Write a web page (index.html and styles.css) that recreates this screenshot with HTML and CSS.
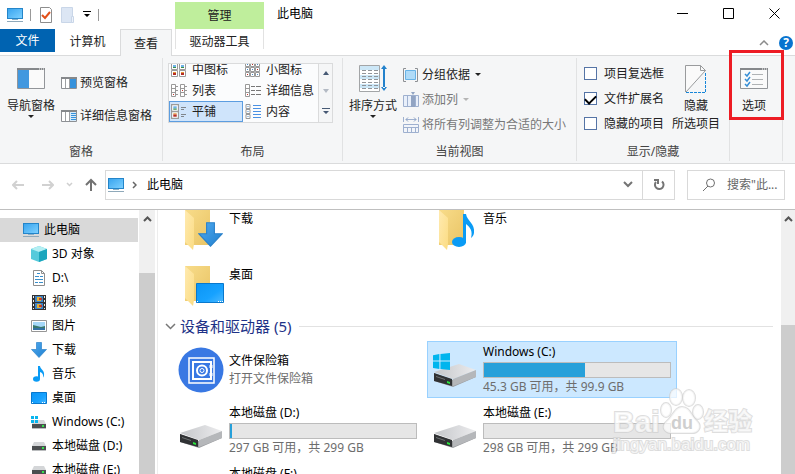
FILE: index.html
```html
<!DOCTYPE html>
<html lang="zh-CN">
<head>
<meta charset="utf-8">
<title>此电脑</title>
<link rel="stylesheet" href="styles.css">
</head>
<body>
<svg class="defs" width="0" height="0" aria-hidden="true">
  <defs>
    <linearGradient id="screen" x1="0" y1="0" x2="1" y2="1"><stop offset="0" stop-color="#3aa5ef"/><stop offset="1" stop-color="#7cd0ff"/></linearGradient>
    <linearGradient id="desk" x1="0" y1="0" x2="1" y2="1"><stop offset="0" stop-color="#0b95f5"/><stop offset=".6" stop-color="#17a2ff"/><stop offset="1" stop-color="#4db9ff"/></linearGradient>
    <linearGradient id="arrow" x1="0" y1="0" x2="1" y2="1"><stop offset="0" stop-color="#4fa9ee"/><stop offset="1" stop-color="#2080d0"/></linearGradient>
    <linearGradient id="back" x1="0" y1="0" x2="1" y2="1"><stop offset="0" stop-color="#f8dc8a"/><stop offset="1" stop-color="#e9c465"/></linearGradient>
    <linearGradient id="flap" x1="0" y1="0" x2="1" y2="1"><stop offset="0" stop-color="#ffeab0"/><stop offset="1" stop-color="#fbdc83"/></linearGradient>
    <linearGradient id="metal" x1="0" y1="0" x2="1" y2="0"><stop offset="0" stop-color="#c4c6c9"/><stop offset="1" stop-color="#ececee"/></linearGradient>
    <symbol id="pc" viewBox="0 0 16 16"><path fill="#2485c9" d="M0 1h16v11H0z"/><path fill="url(#screen)" d="M1 2h14v9H1z"/><path fill="#8bafc6" d="M5 12h6v1H5z"/><path fill="#8fa9ba" d="M0 14h16v1H0z"/></symbol>
    <symbol id="down" viewBox="0 0 16 16"><path fill="url(#arrow)" stroke="#2b82ca" stroke-width=".7" d="M5.500.500h5v7h5L8 15.500.500 7.500h5z"/></symbol>
    <symbol id="note" viewBox="0 0 16 16"><ellipse cx="5.500" cy="13" rx="3.500" ry="2.800" fill="#0a9bf5"/><path fill="#0a9bf5" d="M7 0h2c0 3 5 4.500 4 9.500-.3 1.500-1 2-1 2 .6-3-.5-4.500-3-5.500v7H7z"/></symbol>
    <symbol id="desktop" viewBox="0 0 16 12"><path fill="url(#desk)" stroke="#0878cd" d="M.5.5h15v11H.5z"/><path stroke="#fff" stroke-dasharray="1 1" d="M1 10.500h2M11 10.500h4"/></symbol>
    <symbol id="drive" viewBox="0 0 16 10"><path fill="#d4d6d8" d="m3 0h10l2 4H1z"/><path fill="#4b4e50" d="M1 4h14v4H1z"/><path fill="#babcbe" d="M1 8h14v1H1z"/><path fill="#35e24b" d="M11 5h2v2h-2z"/></symbol>
    <symbol id="bigdrive" viewBox="0 0 44 24"><path fill="#9b9da0" d="M1 9 20 16 43 7v6L20 23 1 17z"/><path fill="url(#metal)" d="m1 8 25-8 17 6-23 9z"/><path fill="#b5b7ba" d="m20 15 23-9v7l-23 9z"/><path fill="#303234" d="m1 9 18 6v7L1 17z"/><path fill="#6f7274" d="m3 12 9 3v1l-9-3z"/><path fill="#28e63c" d="m14 17 3 1v2l-3-1z"/></symbol>
    <symbol id="win" viewBox="0 0 16 16"><path fill="#00b5ee" d="m0 2 6-1v6H0zM7 1l9-1v7H7zM0 8h6v7l-6-1zM7 8h9v8l-9-1z"/></symbol>
    <symbol id="folder" viewBox="0 0 40 42"><path fill="url(#back)" d="M1 0h25v35H1z"/><path fill="url(#flap)" d="m1 0 9 8v26l-1 6-8-8z"/></symbol>
    <symbol id="pane" viewBox="0 0 28 21"><path fill="#fafafa" stroke="#929599" d="M.5.5h27v20H.5z"/><path fill="#85888b" d="M0 0h28v2H0z"/><path stroke="#fff" stroke-dasharray="1 1" d="M22 1h5"/></symbol>
    <symbol id="small-pane" viewBox="0 0 16 12"><path fill="#fff" stroke="#8d9094" d="M.5.5h15v11H.5z"/><path fill="#85888b" d="M0 0h16v2H0z"/><path stroke="#9da0a3" d="M4.500 2v9M8.500 2v9"/></symbol>
    <symbol id="thumb" viewBox="0 0 7 7"><path fill="#fff" stroke="#9b9b9b" d="M.5.5h6v6h-6z"/><path fill="#6eb2e6" d="M2 2h3v2H2z"/><path fill="#3a9148" d="M2 4h3v1H2z"/></symbol>
    <symbol id="thumb-red" viewBox="0 0 7 7"><path fill="#fff" stroke="#9b9b9b" d="M.5.5h6v6h-6z"/><path fill="#e79836" d="M2 2h3v1H2z"/><path fill="#b42c27" d="M2 3h3v2H2z"/></symbol>
    <symbol id="dot" viewBox="0 0 5 5"><path fill="#fff" stroke="#999" d="M.5.5h4v4h-4z"/><path fill="#4a8bc8" d="M2 2h1v1H2z"/></symbol>
  </defs>
</svg>

<header class="titlebar">
  <div class="quick">
    <svg class="i16" aria-hidden="true"><use href="#pc"/></svg>
    <span class="tick"></span>
    <button class="plain" aria-label="属性"><svg width="12" height="16"><path fill="#fff" stroke="#8d8d8d" d="M.5.5h9l2 2v13H.5z"/><path fill="none" stroke="#e2501a" stroke-width="2" d="m2 8 3 3 5-6"/></svg></button>
    <button class="plain" aria-label="新建文件夹"><svg width="13" height="16"><path fill="#dce6f4" stroke="#c9d6e8" d="M.5.5h11v15H.5z"/><path fill="#edf2fa" stroke="#c9d6e8" d="M10.500 9.500h2v6h-2z"/></svg></button>
    <button class="plain" aria-label="自定义快速访问工具栏"><svg width="8" height="7"><path d="M0 0h8v1H0zM1 3h6L4 6z"/></svg></button>
    <span class="tick"></span>
  </div>
  <div class="context-title">管理</div>
  <h1 class="title">此电脑</h1>
  <div class="window-buttons">
    <button aria-label="最小化"><svg width="11" height="11"><path stroke="#000" d="M0 5.500h11"/></svg></button>
    <button aria-label="最大化"><svg width="11" height="11"><path fill="none" stroke="#000" d="M.5.5h10v10H.5z"/></svg></button>
    <button aria-label="关闭"><svg width="11" height="11"><path stroke="#000" d="m.5.5 10 10m0-10-10 10"/></svg></button>
  </div>
</header>

<nav class="tabs">
  <button class="tab file">文件</button>
  <button class="tab computer">计算机</button>
  <button class="tab active">查看</button>
  <button class="tab context">驱动器工具</button>
  <span class="tab-tools">
    <button class="plain" aria-label="折叠功能区"><svg width="10" height="6"><path fill="none" stroke="#8b8b8b" stroke-width="1.500" d="m1 5 4-4 4 4"/></svg></button>
    <button class="help" aria-label="帮助">?</button>
  </span>
</nav>

<section class="ribbon">
  <div class="group panes">
    <div class="group-body">
      <button class="large"><svg width="28" height="21"><use href="#pane"/><path fill="#4298df" d="M1 2h11v18H1z"/></svg><span>导航窗格</span><i class="caret"></i></button>
      <div class="stack wide-stack">
        <button class="small"><svg width="16" height="12"><use href="#small-pane"/><path fill="#3592dc" d="M9 2h6v9H9z"/></svg>预览窗格</button>
        <button class="small"><svg width="16" height="12"><use href="#small-pane"/><path fill="#d7ebfb" d="M9 2h6v9H9z"/><path stroke="#3592dc" d="M10 3.500h5M10 5.500h5M10 7.500h5M10 9.500h5"/></svg>详细信息窗格</button>
      </div>
    </div>
    <div class="group-name">窗格</div>
  </div>

  <div class="group layout">
    <div class="group-body">
      <div class="gallery">
        <div class="views">
          <button class="view"><svg class="i16"><use href="#thumb" width="7" height="7" x="0" y="1"/><use href="#thumb" width="7" height="7" x="8" y="1"/><use href="#thumb-red" width="7" height="7" x="0" y="8"/><use href="#thumb-red" width="7" height="7" x="8" y="8"/></svg>中图标</button>
          <button class="view"><svg class="i16"><use href="#dot" width="5" height="5"/><use href="#dot" width="5" height="5" x="5"/><use href="#dot" width="5" height="5" x="10"/><use href="#dot" width="5" height="5" y="5"/><use href="#dot" width="5" height="5" x="5" y="5"/><use href="#dot" width="5" height="5" x="10" y="5"/><use href="#dot" width="5" height="5" y="10"/><use href="#dot" width="5" height="5" x="5" y="10"/><use href="#dot" width="5" height="5" x="10" y="10"/><path fill="#b92e27" d="M7 2h1v1H7zM12 7h1v1h-1zM2 12h1v1H2z"/></svg>小图标</button>
          <button class="view"><svg class="i16"><path fill="#fff" stroke="#999" d="M.5 1.500h4v12h-4zM9.500 1.500h4v12h-4zM0 5.500h5M0 9.500h5M9 5.500h5M9 9.500h5"/><path stroke="#999" d="M5 3.500h2M5 7.500h2M5 11.500h2M14 3.500h2M14 7.500h2M14 11.500h2"/><path fill="#c73932" d="M2 11h1v1H2zM11 7h1v1h-1z"/></svg>列表</button>
          <button class="view"><svg class="i16"><path fill="#fff" stroke="#999" d="M.5 1.500h4v12h-4zM0 5.500h5M0 9.500h5"/><path stroke="#777" d="M6 3.500h4M11 3.500h5M6 7.500h4M11 7.500h5M6 11.500h4M11 11.500h5"/><path fill="#c73932" d="M2 11h1v1H2z"/></svg>详细信息</button>
          <button class="view selected"><svg class="i16"><use href="#thumb" width="8" height="8"/><use href="#thumb-red" width="8" height="8" y="7"/><path stroke="#7f858b" d="M10 3.500h5M10 5.500h3M10 10.500h5M10 12.500h3"/></svg>平铺</button>
          <button class="view"><svg class="i16"><use href="#dot" width="6" height="5"/><use href="#dot" width="6" height="5" y="5"/><use href="#dot" width="6" height="5" y="10"/><path stroke="#4b91e3" d="M8 1.500h8M8 4.500h8M8 7.500h8M8 10.500h8M8 13.500h8"/></svg>内容</button>
        </div>
        <div class="gallery-scroll">
          <button aria-label="上一行"><svg width="6" height="4"><path fill="#465974" d="M0 4h6L3 0z"/></svg></button>
          <button aria-label="下一行"><svg width="6" height="4"><path fill="#b3bac4" d="M0 0h6L3 4z"/></svg></button>
          <button aria-label="更多"><svg width="8" height="7"><path fill="#465974" d="M0 0h8v1H0zM1 3h6L4 6z"/></svg></button>
        </div>
      </div>
    </div>
    <div class="group-name">布局</div>
  </div>

  <div class="group current">
    <div class="group-body">
      <button class="large"><svg width="28" height="27"><path fill="#fff" stroke="#a3a5a7" d="M.5.5h20v26H.5z"/><path fill="#cce7f7" d="M1 1h19v4H1zM1 10h19v4H1zM1 19h19v4H1z"/><path stroke="#929599" stroke-dasharray="4 2" d="M3 5.500h16M3 8.500h16M3 11.500h16M3 14.500h16M3 17.500h16M3 20.500h16M3 23.500h16"/><path fill="#2382cc" d="M24 4h2v19h-2zM22 4l3-4 3 4zM22 22l3 4 3-4z"/></svg><span>排序方式</span><i class="caret"></i></button>
      <div class="stack">
        <button class="small"><svg class="i16"><path fill="#afdbf8" stroke="#68b3e6" d="M2.500 3.500h10v9h-10z"/><path fill="none" stroke="#8d9094" d="M3 1.500H.5v13H3M12 1.500h2.500v13H12"/></svg>分组依据<i class="caret"></i></button>
        <button class="small" disabled><svg class="i16"><path fill="#e8effa" stroke="#9eb0cf" d="M.5 3.500h15v11H.5z"/><path stroke="#9eb0cf" d="M4.500 4v10M12.500 4v10"/><path fill="#91a4c3" d="M8 4h4v11H8zM8 0h4L10 3z"/></svg>添加列<i class="caret"></i></button>
        <button class="small" disabled><svg class="i16"><path fill="#f2f5fa" stroke="#9eb0cf" d="M.5 7.500h15v8H.5zM0 10.500h16M4.500 11v5M8.500 11v5M12.500 11v5M.5 0v5M15.500 0v5M3 2.500h10"/><path fill="none" stroke="#879ec4" d="M5 .5 3 2.500l2 2M11 .5l2 2-2 2"/></svg>将所有列调整为合适的大小</button>
      </div>
    </div>
    <div class="group-name">当前视图</div>
  </div>

  <div class="group show">
    <div class="group-body">
      <div class="checks">
        <label><input type="checkbox">项目复选框</label>
        <label><input type="checkbox" checked>文件扩展名</label>
        <label><input type="checkbox">隐藏的项目</label>
      </div>
      <button class="large hide"><svg width="22" height="28"><path fill="#fafafa" d="M1 1h14l5 5L1 27z"/><path fill="none" stroke="#999b9d" d="M.5 27V.5h15l5 5L1 27M15.500.5v5h5"/><path fill="none" stroke="#1686d9" stroke-dasharray="3 1" d="M20.500 8v19.500H0"/></svg><span>隐藏<br>所选项目</span></button>
    </div>
    <div class="group-name">显示/隐藏</div>
  </div>

  <div class="group options">
    <div class="group-body">
      <button class="large"><svg width="28" height="21"><use href="#pane"/><path stroke="#b0b3b5" d="M12 6.500h11M12 11.500h11M12 16.500h11"/><path fill="none" stroke="#378fd6" stroke-width="1.500" d="m5 6 2 2 3-4M5 11l2 2 3-4M5 16l2 2 3-4"/></svg><span>选项</span></button>
    </div>
    <span class="marker"></span>
  </div>
</section>

<section class="location">
  <div class="nav-buttons">
    <button class="plain" aria-label="后退" disabled><svg width="12" height="10"><path fill="none" stroke="#d1d1d1" stroke-width="2" d="M12 5H1M5 1 1 5l4 4"/></svg></button>
    <button class="plain" aria-label="前进" disabled><svg width="12" height="10"><path fill="none" stroke="#d1d1d1" stroke-width="2" d="M0 5h11M7 1l4 4-4 4"/></svg></button>
    <button class="plain recent" aria-label="最近浏览的位置"><svg width="7" height="5"><path fill="none" stroke="#cfcfcf" stroke-width="1.500" d="m1 1 2.500 2.500L6 1"/></svg></button>
    <button class="plain" aria-label="上移"><svg width="12" height="13"><path fill="none" stroke="#727272" stroke-width="2" d="M6 13V2M1 7l5-5 5 5"/></svg></button>
  </div>
  <div class="address">
    <svg class="i16" aria-hidden="true"><use href="#pc"/></svg>
    <svg class="crumb" width="5" height="8"><path fill="none" stroke="#666" stroke-width="1.500" d="m1 1 3 3-3 3"/></svg>
    <a href="#">此电脑</a>
    <button class="plain" aria-label="以前的位置"><svg width="10" height="7"><path fill="none" stroke="#747474" stroke-width="2" d="m1 1 4 4 4-4"/></svg></button>
    <button class="refresh" aria-label="刷新"><svg width="12" height="12"><path fill="none" stroke="#747474" stroke-width="2" d="M9 2.500A4.300 4.300 0 1 1 3 3"/><path fill="#747474" d="M1 0h5v5H4V2H1z"/></svg></button>
  </div>
  <label class="search"><svg width="14" height="14" aria-hidden="true"><circle cx="8.500" cy="5" r="4" fill="none" stroke="#707070"/><path stroke="#707070" d="m6 8-5 5"/></svg><input type="text" aria-label="搜索" placeholder="搜索&quot;此..."></label>
</section>

<main class="body">
  <nav class="tree">
    <a class="root" href="#"><svg class="i16"><use href="#pc"/></svg>此电脑</a>
    <a href="#"><svg class="i16"><path fill="#55cadb" d="m0 3 8-3 8 3v10l-8 3-8-3z"/><path fill="#b4eff3" d="m0 3 8-3 8 3-8 3z"/><path fill="#1ba6bd" d="m8 6 8-3v10l-8 3z"/></svg>3D 对象</a>
    <a href="#"><svg class="i16"><path fill="#fff" stroke="#8e8e8e" d="M2.500.5h8l3 3v12h-11zM10.500.5v3h3"/><path stroke="#3a8fcb" d="M6 3.500h3M4 6.500h4M9 6.500h3M4 9.500h8M4 12.500h3M8 12.500h4"/></svg>D:\</a>
    <a href="#"><svg class="i16"><path fill="#333" d="M1 1h14v15H1z"/><path stroke="#eee" stroke-dasharray="2 2" d="M2.500 2v13M13.500 2v13"/><path fill="#3e83c8" d="M4 2h8v6H4zM4 9h8v6H4z"/><path fill="#e3b232" d="M6 3h4v4H6zM6 10h4v4H6z"/><path fill="#bd3c31" d="M8 4h3v2H8zM8 11h3v2H8z"/></svg>视频</a>
    <a href="#"><svg class="i16"><path fill="#fff" stroke="#969696" d="M.5 2.500h15v11H.5z"/><path fill="#a6d8f8" d="M2 4h12v8H2z"/><path fill="#39796e" d="m2 7 4 1 4 1 4-1v3H2z"/><path fill="#3371a4" d="M2 10h12v2H2z"/></svg>图片</a>
    <a href="#"><svg class="i16"><use href="#down"/></svg>下载</a>
    <a href="#"><svg class="i16"><use href="#note"/></svg>音乐</a>
    <a href="#"><svg class="i16"><use href="#desktop" y="2" width="16" height="12"/></svg>桌面</a>
    <a href="#"><svg class="i16"><use href="#drive" y="6" width="16" height="10"/><path fill="#08b5ee" d="M0 2h3v3H0zM4 2h3v3H4zM0 6h3v3H0zM4 6h3v3H4z"/></svg>Windows (C:)</a>
    <a href="#"><svg class="i16"><use href="#drive" y="4" width="16" height="10"/></svg>本地磁盘 (D:)</a>
    <a href="#"><svg class="i16"><use href="#drive" y="4" width="16" height="10"/></svg>本地磁盘 (E:)</a>
  </nav>
  <div class="scrollbar tree-scroll"><svg width="9" height="6"><path fill="none" stroke="#555" stroke-width="2" d="m1 5 3.500-3.500L8 5"/></svg><span></span></div>

  <section class="content">
    <div class="tiles folders">
      <a class="tile" href="#"><svg width="44" height="44"><use href="#folder" width="40" height="42"/><use href="#down" x="14" y="12" width="25" height="25"/></svg><strong>下载</strong></a>
      <a class="tile" href="#"><svg width="44" height="44"><use href="#folder" width="40" height="42"/><ellipse cx="21" cy="32" rx="7" ry="5" fill="#0a9bf5"/><path fill="#0a9bf5" d="M25 4h3c1 7 9 9 8 19-.5 3-2 4-3 5 2-7-1-11-5-14v19h-3z"/></svg><strong>音乐</strong></a>
      <a class="tile" href="#"><svg width="44" height="44"><use href="#folder" width="40" height="42"/><path fill="url(#desk)" stroke="#0878cd" d="M12.500 17.500h27v19h-27z"/><path stroke="#fff" stroke-dasharray="1 1" d="M13 35.500h2M34 35.500h5"/></svg><strong>桌面</strong></a>
    </div>
    <h2><svg width="11" height="7"><path fill="none" stroke="#777" stroke-width="1.500" d="m1 1 4.500 4.500L10 1"/></svg>设备和驱动器 (5)</h2>
    <div class="tiles">
      <a class="tile vault" href="#"><svg width="46" height="46"><circle cx="23" cy="23" r="22.500" fill="#3978e3"/><g fill="none" stroke="#fff"><path stroke-width="1.500" d="M11 11h25v25H11z"/><path stroke-width="2" d="M15 15h18v17H15z"/><circle cx="24" cy="23.500" r="5" stroke-width="2"/><circle cx="24" cy="23.500" r="2"/><path stroke-width="3" stroke-dasharray="3 5" d="M33 18v15"/></g></svg><span class="info"><strong>文件保险箱</strong><span class="sub">打开文件保险箱</span></span></a>
      <a class="tile chosen" href="#"><svg width="46" height="46"><use href="#bigdrive" x="1" y="17" width="44" height="24"/><use href="#win" x="1" y="6" width="17" height="17"/></svg><span class="info"><strong>Windows (C:)</strong><span class="bar"><span style="width:54.5%"></span></span><span class="sub">45.3 GB 可用，共 99.9 GB</span></span></a>
      <a class="tile" href="#"><svg width="46" height="46"><use href="#bigdrive" x="1" y="17" width="44" height="24"/></svg><span class="info"><strong>本地磁盘 (D:)</strong><span class="bar"><span style="width:1%"></span></span><span class="sub">297 GB 可用，共 299 GB</span></span></a>
      <a class="tile" href="#"><svg width="46" height="46"><use href="#bigdrive" x="1" y="17" width="44" height="24"/></svg><span class="info"><strong>本地磁盘 (E:)</strong><span class="bar"></span><span class="sub">298 GB 可用，共 299 GB</span></span></a>
      <a class="tile" href="#"><svg width="46" height="46"><use href="#bigdrive" x="1" y="17" width="44" height="24"/></svg><span class="info"><strong>本地磁盘 (F:)</strong><span class="bar"></span></span></a>
    </div>
    <svg class="watermark" width="146" height="76" aria-hidden="true">
      <g fill="#fff" fill-opacity=".7" stroke="#cfcfcf" stroke-opacity=".7" paint-order="stroke" stroke-width="2">
        <text class="wm-latin" x="4" y="46">Bai</text>
        <ellipse cx="57" cy="24" rx="5" ry="7"/><ellipse cx="67" cy="11" rx="6" ry="8"/><ellipse cx="80" cy="12" rx="6" ry="8"/><ellipse cx="89" cy="26" rx="5" ry="7"/>
        <path d="M73 21c8 0 9 9 15 14 6 6 1 13-7 12H65c-9 1-14-6-7-12 6-5 8-14 15-14z"/>
        <text class="wm-cjk" x="95" y="44">经验</text>
        <text class="wm-url" x="4" y="64">jingyan.baidu.com</text>
      </g>
      <text class="wm-du" x="62" y="43" fill="#cfcfcf">du</text>
    </svg>
  </section>
  <div class="scrollbar main-scroll"><svg width="9" height="6"><path fill="none" stroke="#555" stroke-width="2" d="m1 5 3.500-3.500L8 5"/></svg><span></span></div>
</main>
</body>
</html>
```

FILE: styles.css
```css
* { box-sizing: border-box; }
body {
  margin: 0;
  height: 100vh;
  display: flex;
  flex-direction: column;
  overflow: hidden;
  background: #fff;
  color: #000;
  font: 12px/18px "Noto Sans", "Noto Sans CJK SC", sans-serif;
  white-space: nowrap;
}
button, input { font: inherit; color: inherit; }
button { border: 0; background: none; padding: 0; }
a { color: inherit; text-decoration: none; }
svg { display: block; flex: none; }
strong { font-weight: 400; }
.defs { position: absolute; }
.i16 { width: 16px; height: 16px; }
.plain { display: flex; align-items: center; }

/* Title bar */
.titlebar { display: flex; height: 29px; flex: none; }
.quick { display: flex; align-items: center; width: 175px; padding-left: 7px; gap: 7px; }
.quick .tick { width: 1px; height: 12px; background: #999; }
.quick .plain { margin-left: 2px; }
.context-title {
  width: 89px;
  margin-top: 2px;
  background: #bfee9c;
  color: #222;
  line-height: 27px;
  text-align: center;
}
.title { margin: 0; padding-left: 13px; font-size: 12px; font-weight: 400; line-height: 28px; }
.window-buttons { display: flex; gap: 4px; margin-left: auto; }
.window-buttons button { display: grid; place-items: center; width: 42px; height: 27px; }

/* Tabs */
.tabs { display: flex; height: 27px; flex: none; position: relative; z-index: 1; margin-bottom: -1px; color: #222; }
.tab { height: 26px; line-height: 26px; text-align: center; }
.file { width: 55px; height: 23px; background: #0063b1; color: #fff; line-height: 24px; }
.computer { width: 65px; }
.active { width: 52px; height: 27px; border: 1px solid #dadbdc; border-bottom: 0; background: #f5f6f7; line-height: 25px; }
.context { width: 89px; height: 20px; margin-left: 3px; border: solid #e2e2e2; border-width: 0 1px; }
.tab-tools { display: flex; align-items: center; gap: 10px; margin-left: auto; padding-right: 2px; }
.help {
  width: 14px;
  height: 14px;
  border-radius: 50%;
  background: #0873cf;
  color: #fff;
  font-weight: 700;
  line-height: 14px;
}

/* Ribbon */
.ribbon {
  display: flex;
  flex: none;
  height: 109px;
  padding-top: 2px;
  border: solid #dadbdc;
  border-width: 1px 0;
  background: #f5f6f7;
  color: #222;
}
.group { display: flex; flex-direction: column; position: relative; margin-bottom: 2px; border-right: 1px solid #e1e2e3; }
.group-body { display: flex; flex: 1; }
.group-name { text-align: center; line-height: 18px; color: #444; }
.panes { width: 163px; }
.layout { width: 180px; }
.current { width: 234px; }
.show { width: 153px; }
.options { width: 53px; }
.large {
  display: flex;
  flex-direction: column;
  align-items: center;
  width: 48px;
  height: 60px;
  margin-top: 7px;
}
.large svg { height: 28px; }
.large span { margin-top: 4px; }
.caret { border: 3px solid transparent; border-top-color: currentColor; border-bottom: 0; }
.small { display: flex; align-items: center; gap: 3px; height: 25px; }
.small .caret { margin-left: 2px; }
.small:disabled { color: #777; }
.small:disabled .caret { color: #b5b5b5; }
.stack { display: flex; flex-direction: column; align-items: flex-start; margin-left: 6px; padding-top: 4px; }
.panes .large { margin-left: 7px; }
.current .large { margin-left: 6px; }
.panes .large, .options .large { padding-top: 3px; }
.panes .large svg, .options .large svg { height: 21px; margin-bottom: 4px; }
.wide-stack { padding-top: 12px; gap: 8px; }
.gallery {
  display: flex;
  flex: 1;
  height: 60px;
  margin: 5px 9px 0 5px;
  border: 1px solid #dadbdc;
  background: #fbfcfd;
}
.views { display: grid; grid-template-columns: 74px 1fr; grid-auto-rows: 21px; align-content: end; flex: 1; overflow: hidden; }
.view { display: flex; align-items: center; gap: 5px; padding-left: 1px; border: 1px solid transparent; }
.selected { border-color: #5c9de0; background: #cfe4fb; }
.gallery-scroll { display: grid; width: 14px; border-left: 1px solid #dadbdc; }
.gallery-scroll button { display: grid; place-items: center; background: #f5f6f7; }
.checks { display: flex; flex-direction: column; padding: 3px 0 0 7px; }
.checks label { display: flex; align-items: center; gap: 7px; height: 25px; }
.checks input {
  appearance: none;
  display: grid;
  place-items: center;
  width: 13px;
  height: 13px;
  margin: 0;
  border: 1px solid #5574a6;
  background: #fff;
}
.checks input:checked::before {
  content: "";
  width: 5px;
  height: 9px;
  margin-bottom: 2px;
  border: solid #000;
  border-width: 0 2px 2px 0;
  transform: rotate(45deg);
}
.hide { margin-left: 8px; }
.options .large { width: 48px; }
.marker { position: absolute; inset: -8px -2px 41px -1px; border: 3px solid #ed1c24; }

/* Address row */
.location { display: flex; align-items: center; flex: none; height: 46px; padding: 0 10px 4px 12px; border-bottom: 1px solid #bfbfbf; }
.nav-buttons { display: flex; align-items: center; gap: 18px; width: 93px; }
.nav-buttons .recent { margin: 0 -6px; }
.address { display: flex; align-items: center; flex: 1; height: 30px; padding-left: 2px; border: 1px solid #d9d9d9; }
.crumb { margin: 0 10px 0 8px; }
.address .plain { margin-left: auto; }
.refresh { display: grid; place-items: center; width: 32px; height: 100%; margin-left: 9px; border-left: 1px solid #d9d9d9; }
.search { display: flex; align-items: center; width: 98px; height: 30px; margin-left: 12px; padding-left: 14px; gap: 11px; border: 1px solid #d9d9d9; }
.search input { flex: 1; min-width: 0; padding: 0; border: 0; outline: 0; background: none; }
.search input::placeholder { color: #666; opacity: 1; }

/* Body */
.body { display: flex; flex: 1; min-height: 0; }
.tree { width: 138px; padding-top: 8px; overflow: hidden; }
.tree a { display: flex; align-items: center; gap: 5px; height: 24px; padding-left: 31px; }
.tree .root { padding-left: 23px; background: #d9d9d9; }
.scrollbar { display: flex; flex-direction: column; align-items: center; flex: none; background: #f0f0f0; }
.scrollbar svg { margin-top: 6px; }
.scrollbar span { flex: 1; width: 100%; background: #cdcdcd; }
.tree-scroll { width: 16px; margin-left: 1px; }
.tree-scroll span { margin-top: 51px; }
.main-scroll { width: 14px; }
.main-scroll span { margin-top: 103px; }
.content { position: relative; flex: 1; min-width: 0; margin-left: 2px; padding-left: 15px; overflow: hidden; border-left: 1px solid #ededed; }
.tiles { display: grid; grid-template-columns: repeat(auto-fill, 250px); grid-auto-rows: 57px; gap: 4px; }
.folders { grid-auto-rows: 56px; row-gap: 0; margin-top: -9px; }
.tile { display: flex; align-items: center; gap: 5px; padding: 0 5px 0 4px; border: 1px solid transparent; }
.folders .tile { align-items: flex-start; gap: 1px; padding: 8px 0 0 10px; }
.info { display: flex; flex-direction: column; flex: 1; align-self: flex-start; padding-top: 1px; }
.vault .info { align-self: center; padding: 0; }
.sub { color: #6d6d6d; }
.bar { display: block; height: 16px; margin-top: 1px; border: 1px solid #bcbcbc; background: #e6e6e6; }
.bar span { display: block; height: 100%; background: #26a0da; }
.chosen { border-color: #99d1ff; background: #cce8ff; }
h2 { display: flex; align-items: center; gap: 4px; height: 20px; margin: 3px 8px 5px -8px; color: #1e3287; font-size: 15px; font-weight: 400; }
h2::after { content: ""; flex: 1; height: 1px; margin-left: 4px; background: #e2e2e2; }
.watermark { position: absolute; right: 26px; bottom: 12px; }
.wm-latin { font: 700 30px "Liberation Sans", sans-serif; }
.wm-du { font: 700 18px "Liberation Sans", sans-serif; }
.wm-cjk { font: 700 24px "Noto Sans CJK SC", sans-serif; }
.wm-url { font: 17px "Liberation Sans", sans-serif; }
```
